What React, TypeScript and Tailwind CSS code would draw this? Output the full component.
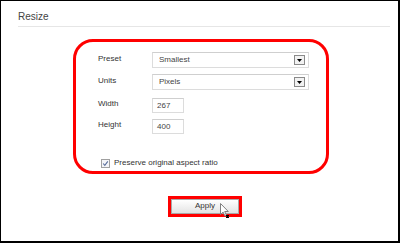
import React from 'react'

function SelectBox({ value }: { value: string }) {
  return (
    <div className="flex items-center justify-between w-[157px] h-[16px] border border-[#dcdcdc] border-t-[#cfcfcf] bg-white pl-[6px] pr-[3px]">
      <span className="text-[8px] text-[#444]">{value}</span>
      <div className="flex items-center justify-center w-[11px] h-[10px] border border-[#8a8a8a] bg-[#f2f2f2]">
        <svg width="5" height="3" viewBox="0 0 5 3">
          <path d="M0 0h5L2.5 3z" fill="#000" />
        </svg>
      </div>
    </div>
  )
}

function NumberBox({ value }: { value: string }) {
  return (
    <div className="flex items-center w-[32px] h-[15px] border border-[#dcdcdc] border-t-[#cfcfcf] bg-white pl-[4px]">
      <span className="text-[8px] text-[#444]">{value}</span>
    </div>
  )
}

function Row({ label, children, className }: { label: string; children: React.ReactNode; className?: string }) {
  return (
    <div className={`flex items-center ${className ?? ''}`}>
      <span className="w-[54px] text-[8px] text-[#333] -mt-[3px]">{label}</span>
      {children}
    </div>
  )
}

export default function App() {
  return (
    <div
      className="w-[400px] h-[243px] box-border border-l border-t border-r-2 border-b-2 border-black bg-white pl-[17px] pr-[8px] pt-[10px] flex flex-col"
      style={{ fontFamily: '"Liberation Sans", Arial, sans-serif' }}
    >
      <div className="text-[10px] leading-[12px] text-[#444]">Resize</div>
      <div className="mt-[3px] h-px bg-[#e6e6e6]" />

      <div className="mt-[12px] ml-[55px] w-[256px] h-[135px] border-[3px] border-[#ff0000] rounded-[20px] pl-[22px] pt-[10px] flex flex-col">
        <Row label="Preset">
          <SelectBox value="Smallest" />
        </Row>
        <Row label="Units" className="mt-[6px]">
          <SelectBox value="Pixels" />
        </Row>
        <Row label="Width" className="mt-[8px]">
          <NumberBox value="267" />
        </Row>
        <Row label="Height" className="mt-[6px]">
          <NumberBox value="400" />
        </Row>
        <div className="mt-[23px] flex items-center">
          <svg width="9" height="9" viewBox="0 0 9 9" className="ml-[3px]">
            <rect x="0.5" y="0.5" width="8" height="8" fill="#f4f5f8" stroke="#a0a0a0" />
            <path d="M2.2 4.5l1.6 1.8L6.8 2.4" fill="none" stroke="#5a6f9c" strokeWidth="1.1" />
          </svg>
          <span className="ml-[4px] text-[8px] text-[#333]">Preserve original aspect ratio</span>
        </div>
      </div>

      <div className="mt-[22px] ml-[150px] w-[74px] h-[21px] border-[3px] border-[#ff0000] flex">
        <div className="relative flex-1 flex items-center justify-center border border-[#a8a8a8] bg-gradient-to-b from-white to-[#e4e4e4]">
          <span className="text-[8px] text-[#333] -mt-[1px]">Apply</span>
          <svg width="10" height="16" viewBox="0 0 10 16" className="absolute left-[48px] top-[3px]">
            <path d="M0.5 0.5v11l2.6-2.4 1.8 4 1.6-.7-1.8-3.9h3.6z" fill="#fff" stroke="#808080" strokeWidth="1" />
            <path d="M6 12h3v1H6zM6.5 13h2v1h-2zM6 14h3v1H6z" fill="#000" />
          </svg>
        </div>
      </div>
    </div>
  )
}
